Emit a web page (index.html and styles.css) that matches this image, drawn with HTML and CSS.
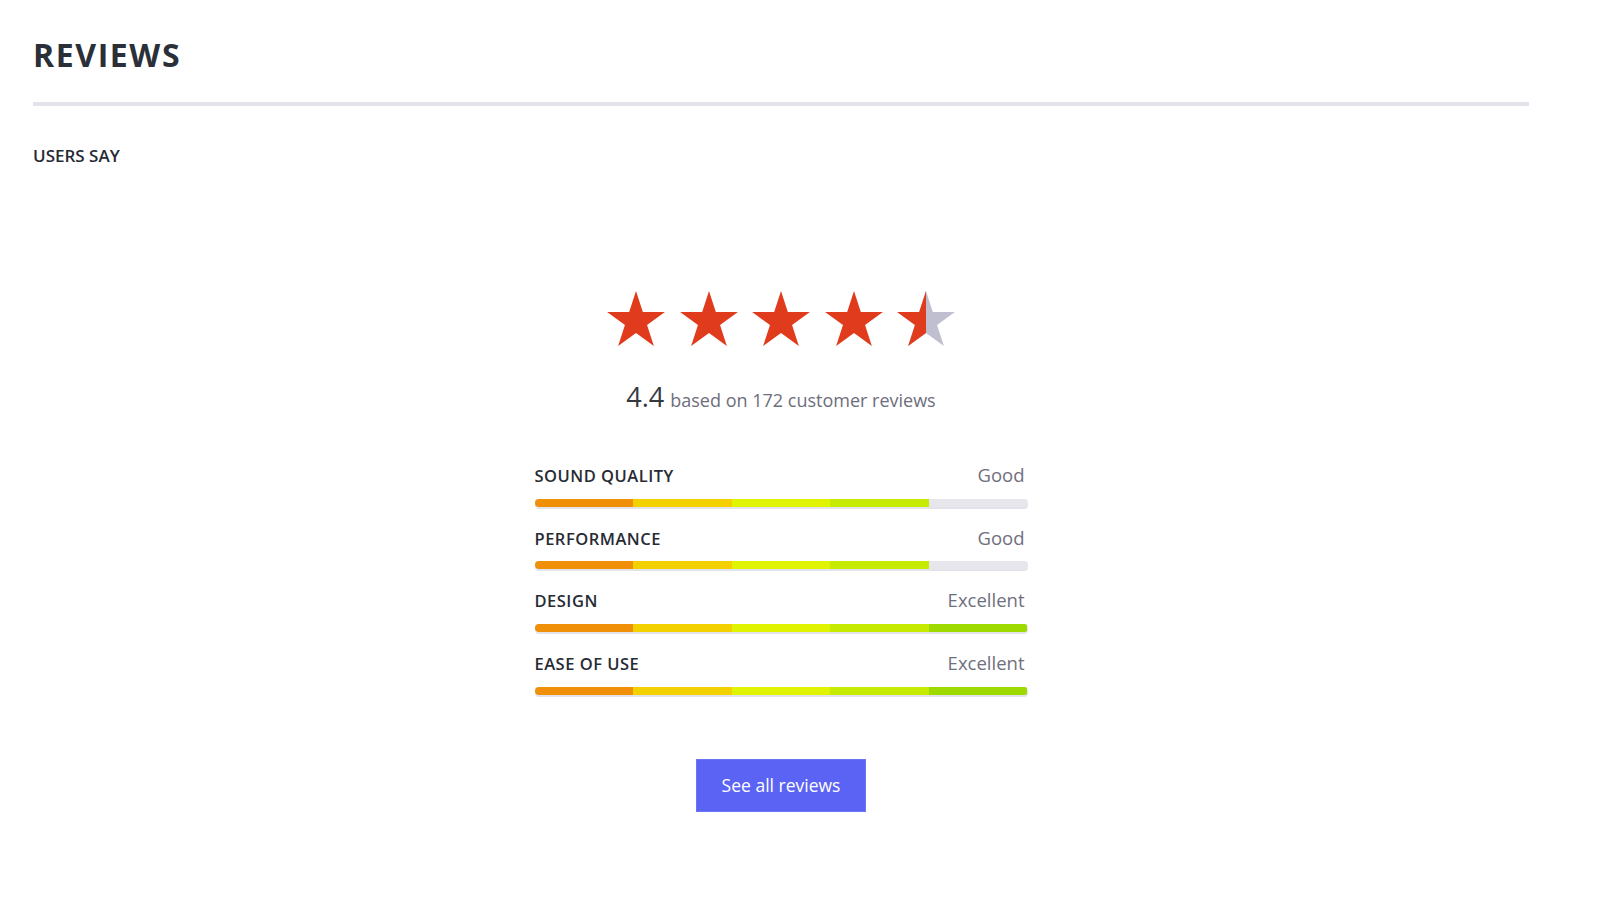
FILE: index.html
```html
<!DOCTYPE html>
<html lang="en">
<head>
<meta charset="utf-8">
<title>Reviews</title>
<link rel="stylesheet" href="styles.css">
</head>
<body>
<div class="page">
  <h1 class="title">REVIEWS</h1>
  <div class="divider"></div>
  <h2 class="subtitle">USERS SAY</h2>

  <section class="summary">
    <div class="stars">
      <svg class="star" viewBox="2.45 0 95.1 90.45"><polygon class="on" points="50,0 61.23,34.55 97.55,34.55 68.17,55.9 79.39,90.45 50,69.1 20.61,90.45 31.83,55.9 2.45,34.55 38.77,34.55"/></svg>
      <svg class="star" viewBox="2.45 0 95.1 90.45"><polygon class="on" points="50,0 61.23,34.55 97.55,34.55 68.17,55.9 79.39,90.45 50,69.1 20.61,90.45 31.83,55.9 2.45,34.55 38.77,34.55"/></svg>
      <svg class="star" viewBox="2.45 0 95.1 90.45"><polygon class="on" points="50,0 61.23,34.55 97.55,34.55 68.17,55.9 79.39,90.45 50,69.1 20.61,90.45 31.83,55.9 2.45,34.55 38.77,34.55"/></svg>
      <svg class="star" viewBox="2.45 0 95.1 90.45"><polygon class="on" points="50,0 61.23,34.55 97.55,34.55 68.17,55.9 79.39,90.45 50,69.1 20.61,90.45 31.83,55.9 2.45,34.55 38.77,34.55"/></svg>
      <svg class="star" viewBox="2.45 0 95.1 90.45">
        <defs><clipPath id="halfclip"><rect x="0" y="0" width="50" height="100"/></clipPath></defs>
        <polygon class="off" points="50,0 61.23,34.55 97.55,34.55 68.17,55.9 79.39,90.45 50,69.1 20.61,90.45 31.83,55.9 2.45,34.55 38.77,34.55"/>
        <polygon class="on" clip-path="url(#halfclip)" points="50,0 61.23,34.55 97.55,34.55 68.17,55.9 79.39,90.45 50,69.1 20.61,90.45 31.83,55.9 2.45,34.55 38.77,34.55"/>
      </svg>
    </div>

    <p class="score"><span class="score-num">4.4</span> <span class="score-text">based on 172 customer reviews</span></p>

    <div class="metrics">
      <div class="metric">
        <div class="metric-head"><span class="metric-name">SOUND QUALITY</span><span class="metric-value">Good</span></div>
        <div class="bar"><span class="seg s1"></span><span class="seg s2"></span><span class="seg s3"></span><span class="seg s4"></span></div>
      </div>
      <div class="metric">
        <div class="metric-head"><span class="metric-name">PERFORMANCE</span><span class="metric-value">Good</span></div>
        <div class="bar"><span class="seg s1"></span><span class="seg s2"></span><span class="seg s3"></span><span class="seg s4"></span></div>
      </div>
      <div class="metric">
        <div class="metric-head"><span class="metric-name">DESIGN</span><span class="metric-value">Excellent</span></div>
        <div class="bar"><span class="seg s1"></span><span class="seg s2"></span><span class="seg s3"></span><span class="seg s4"></span><span class="seg s5"></span></div>
      </div>
      <div class="metric">
        <div class="metric-head"><span class="metric-name">EASE OF USE</span><span class="metric-value">Excellent</span></div>
        <div class="bar"><span class="seg s1"></span><span class="seg s2"></span><span class="seg s3"></span><span class="seg s4"></span><span class="seg s5"></span></div>
      </div>
    </div>

    <button class="btn" type="button">See all reviews</button>
  </section>
</div>
</body>
</html>
```

FILE: styles.css
```css
* { box-sizing: border-box; }

html, body {
  margin: 0;
  padding: 0;
  background: #ffffff;
}

body {
  font-family: "Open Sans", "Noto Sans", "DejaVu Sans", sans-serif;
  color: #2b2f38;
}

.page {
  width: 1496px;
  margin-left: 33px;
  padding-top: 35px;
}

.title {
  margin: 0;
  font-size: 32px;
  line-height: 40px;
  font-weight: 700;
  letter-spacing: 1.6px;
  color: #2b2f38;
}

.divider {
  margin-top: 26.5px;
  height: 4px;
  background: #e3e4eb;
}

.subtitle {
  margin: 38px 0 0 0;
  font-size: 17px;
  line-height: 24px;
  font-weight: 600;
  color: #262a33;
}

.summary {
  display: flex;
  flex-direction: column;
  align-items: center;
  padding-top: 123.5px;
}

.stars {
  display: flex;
  gap: 14.5px;
}

.star {
  display: block;
  width: 58px;
  height: 55px;
}

.star .on { fill: #e03b1c; }
.star .off { fill: #bfbfcf; }

.score {
  margin: 33px 0 0 0;
  display: flex;
  align-items: baseline;
  gap: 6px;
  line-height: 36px;
}

.score-num {
  font-size: 27px;
  color: #363840;
}

.score-text {
  font-size: 18px;
  color: #6d6e7c;
}

.metrics {
  width: 493px;
  margin-top: 45px;
  display: flex;
  flex-direction: column;
  gap: 19.2px;
}

.metric-head {
  display: flex;
  justify-content: space-between;
  align-items: baseline;
  line-height: 24px;
  padding-right: 3px;
}

.metric-name {
  font-size: 16.5px;
  font-weight: 600;
  letter-spacing: 0.5px;
  color: #272b34;
}

.metric-value {
  font-size: 18.5px;
  color: #6f707e;
}

.bar {
  margin-top: 10.5px;
  height: 8px;
  border-radius: 5px;
  background: #e6e6ec;
  box-shadow: 0 2px 0 #e3e3ec;
  display: flex;
  overflow: hidden;
}

.seg {
  width: 20%;
  height: 100%;
}

.s1 { background: #f08f08; }
.s2 { background: #f3d000; }
.s3 { background: #e0f300; }
.s4 { background: #c6eb00; }
.s5 { background: #9ed900; }

.btn {
  margin-top: 64px;
  height: 53px;
  padding: 0 25px;
  border: 1px solid #6c74f6;
  background: #5b63f4;
  color: #ffffff;
  font-family: "Open Sans", "Noto Sans", sans-serif;
  font-size: 17.5px;
  line-height: 24px;
  cursor: pointer;
}
```
